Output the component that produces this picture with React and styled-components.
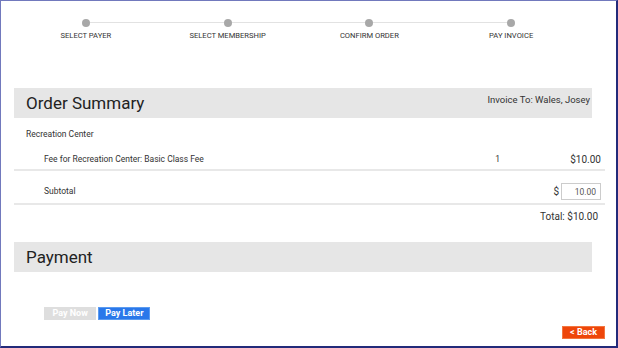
import React from "react";
import styled, { createGlobalStyle } from "styled-components";

const GlobalStyle = createGlobalStyle`
  html, body {
    margin: 0;
    padding: 0;
    background: #ffffff;
  }
`;

const steps = ["Select Payer", "Select Membership", "Confirm Order", "Pay Invoice"];

function App() {
  return (
    <>
      <GlobalStyle />
      <Frame>
        <Stepper>
          {steps.map((label, i) => (
            <Step key={label} last={i === steps.length - 1}>
              <Dot />
              <StepLabel>{label}</StepLabel>
            </Step>
          ))}
        </Stepper>

        <SectionBar>
          <SectionTitle>Order Summary</SectionTitle>
          <InvoiceTo>Invoice To: Wales, Josey</InvoiceTo>
        </SectionBar>

        <Category>Recreation Center</Category>

        <LineRow top={8} bottom={4}>
          <RowLabel>Fee for Recreation Center: Basic Class Fee</RowLabel>
          <Qty>1</Qty>
          <Amount>$10.00</Amount>
        </LineRow>

        <LineRow top={12} bottom={3}>
          <RowLabel>Subtotal</RowLabel>
          <Currency>$</Currency>
          <AmountInput defaultValue="10.00" />
        </LineRow>

        <Total>Total: $10.00</Total>

        <SectionBar payment>
          <SectionTitle>Payment</SectionTitle>
        </SectionBar>

        <ButtonRow>
          <PayButton disabledLook>Pay Now</PayButton>
          <PayButton>Pay Later</PayButton>
        </ButtonRow>

        <BackButton>&lt; Back</BackButton>
      </Frame>
    </>
  );
}

const Frame = styled.div`
  width: 618px;
  height: 348px;
  box-sizing: border-box;
  display: flex;
  flex-direction: column;
  border-style: solid;
  border-width: 1px 2px 2px 1px;
  border-color: #7179bd #232a7a #232a7a #7179bd;
  padding: 0 11px 0 13px;
  background: #ffffff;
  font-family: Roboto, "Liberation Sans", Arial, sans-serif;
  color: #333333;
  overflow: hidden;
`;

const Stepper = styled.div`
  display: grid;
  grid-template-columns: repeat(4, 141.75px);
  padding-top: 18px;
  padding-left: 1px;
`;

const Step = styled.div`
  position: relative;
  display: flex;
  flex-direction: column;
  align-items: center;
  &::after {
    content: "";
    display: ${(p) => (p.last ? "none" : "block")};
    position: absolute;
    top: 3px;
    left: 50%;
    width: 100%;
    height: 1px;
    background: #e2e2e2;
  }
`;

const Dot = styled.span`
  position: relative;
  z-index: 1;
  width: 8px;
  height: 8px;
  border-radius: 50%;
  background: #a8a8a8;
`;

const StepLabel = styled.span`
  margin-top: 4px;
  font-size: 7.6px;
  line-height: 10px;
  text-transform: uppercase;
  color: #333333;
  white-space: nowrap;
`;

const SectionBar = styled.div`
  display: flex;
  justify-content: space-between;
  align-items: flex-start;
  height: 30px;
  margin-top: ${(p) => (p.payment ? "19px" : "47px")};
  margin-right: 13px;
  background: #e6e6e6;
`;

const SectionTitle = styled.h2`
  margin: 0;
  padding: 5px 0 0 12px;
  font-size: 17px;
  line-height: 20px;
  font-weight: 400;
  color: #222222;
`;

const InvoiceTo = styled.span`
  padding: 6px 2px 0 0;
  font-size: 9.5px;
  line-height: 12px;
  color: #333333;
`;

const Category = styled.div`
  padding: 11px 12px 6px;
  font-size: 8.5px;
  line-height: 11px;
  color: #333333;
`;

const LineRow = styled.div`
  display: flex;
  align-items: center;
  padding: ${(p) => `${p.top}px 4px ${p.bottom}px 30px`};
  border-bottom: 2px solid #e8e8e8;
  font-size: 8.5px;
  line-height: 11px;
`;

const RowLabel = styled.span`
  flex: 1;
  color: #333333;
`;

const Qty = styled.span`
  width: 75px;
  text-align: left;
`;

const Amount = styled.span`
  font-size: 10px;
  color: #333333;
`;

const Currency = styled.span`
  font-size: 10px;
  margin-right: 2px;
`;

const AmountInput = styled.input`
  box-sizing: border-box;
  width: 40px;
  height: 17px;
  padding: 0 4px;
  border: 1px solid #cccccc;
  font-family: inherit;
  font-size: 8.5px;
  color: #555555;
  text-align: right;
  outline: none;
`;

const Total = styled.div`
  margin-top: 6px;
  padding-right: 7px;
  text-align: right;
  font-size: 10px;
  line-height: 12px;
  color: #333333;
`;

const ButtonRow = styled.div`
  display: flex;
  gap: 2px;
  margin-top: 35px;
  padding-left: 30px;
`;

const PayButton = styled.button`
  box-sizing: border-box;
  height: 13px;
  padding: 0 ${(p) => (p.disabledLook ? "7.5px" : "6px")};
  border: 1px solid ${(p) => (p.disabledLook ? "#dedede" : "#5b9bf0")};
  background: ${(p) => (p.disabledLook ? "#dedede" : "#2a78ea")};
  color: #ffffff;
  font-family: inherit;
  font-size: 9px;
  font-weight: 700;
  line-height: 11px;
  cursor: pointer;
`;

const BackButton = styled.button`
  align-self: flex-end;
  box-sizing: border-box;
  height: 13px;
  margin-top: 6px;
  padding: 0 7px;
  border: 1px solid #f3763f;
  background: #ee460a;
  color: #ffffff;
  font-family: inherit;
  font-size: 9px;
  font-weight: 700;
  line-height: 11px;
  cursor: pointer;
`;

export default App;
